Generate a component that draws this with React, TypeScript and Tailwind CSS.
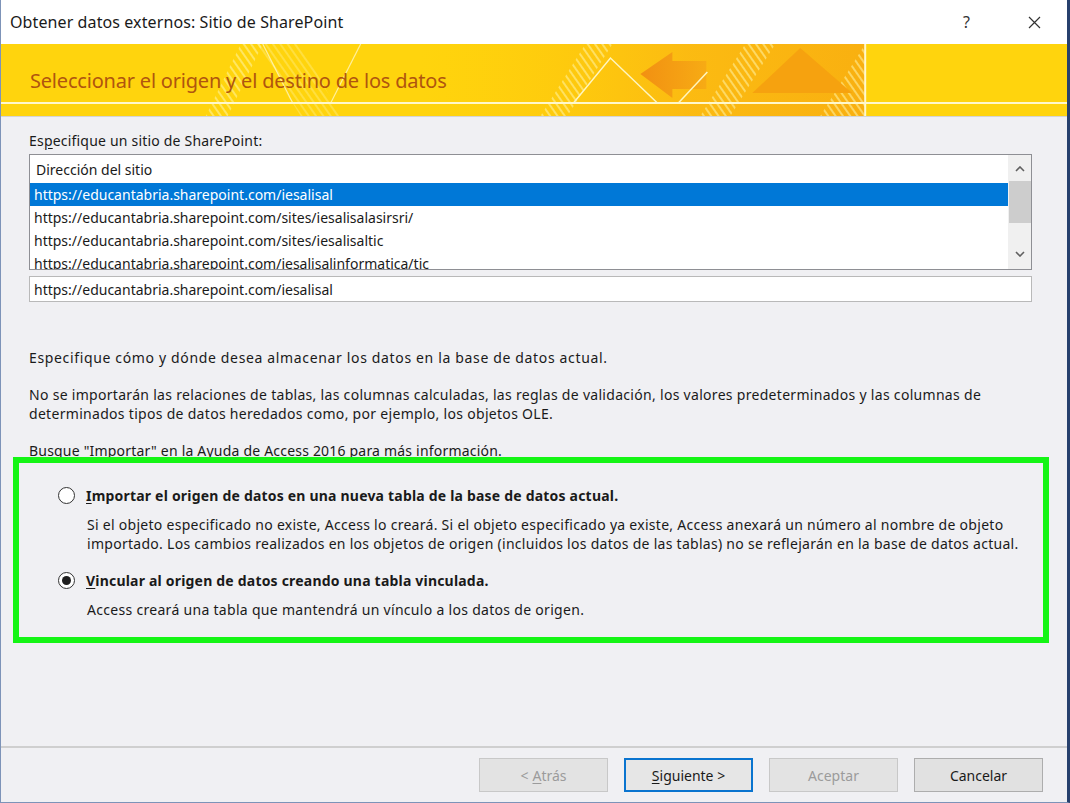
import React from "react";

const urls = [
  "https://educantabria.sharepoint.com/iesalisal",
  "https://educantabria.sharepoint.com/sites/iesalisalasirsri/",
  "https://educantabria.sharepoint.com/sites/iesalisaltic",
  "https://educantabria.sharepoint.com/iesalisalinformatica/tic",
];

const BannerArt = () => (
  <svg className="absolute inset-0 h-full w-full" viewBox="0 0 1067 72" preserveAspectRatio="none">
    <defs>
      <pattern id="hatch" width="6" height="6" patternUnits="userSpaceOnUse" patternTransform="rotate(-35)">
        <rect width="2" height="6" fill="#fff3a6" opacity="0.55" />
      </pattern>
      <linearGradient id="glow" x1="0" x2="1" y1="0" y2="0">
        <stop offset="0" stopColor="#ffc90a" stopOpacity="0" />
        <stop offset="0.6" stopColor="#fbb812" stopOpacity="0.9" />
        <stop offset="1" stopColor="#f9b010" stopOpacity="1" />
      </linearGradient>
      <linearGradient id="arrow" x1="0" x2="1" y1="0" y2="0">
        <stop offset="0" stopColor="#f29012" />
        <stop offset="1" stopColor="#f7ab14" />
      </linearGradient>
    </defs>
    <rect x="420" y="0" width="445" height="72" fill="url(#glow)" />
    <polygon points="205,72 240,0 262,0 227,72" fill="url(#hatch)" />
    <polygon points="540,72 585,0 612,0 567,72" fill="url(#hatch)" />
    <polygon points="700,72 745,0 775,0 730,72" fill="url(#hatch)" />
    <polygon points="820,72 865,0 865,72" fill="url(#hatch)" />
    <polygon points="255,0 300,0 340,72 300,72" fill="url(#hatch)" opacity="0.6" />
    <polygon points="640,30 672,8 672,17 706,17 706,45 672,45 672,54" fill="url(#arrow)" />
    <polygon points="752,49 800,4 852,49" fill="#f6a20f" />
    <polyline points="573,59 610,14 657,59" fill="none" stroke="#fff6c0" strokeWidth="1.5" />
    <polyline points="678,59 707,28" fill="none" stroke="#fff6c0" strokeWidth="1.5" />
    <polyline points="262,0 292,59" fill="none" stroke="#fff6c0" strokeWidth="1.2" opacity="0.8" />
    <polyline points="330,59 360,0" fill="none" stroke="#fff6c0" strokeWidth="1.2" opacity="0.8" />
    <rect x="0" y="58" width="1067" height="2" fill="#fff8cc" />
    <rect x="864" y="0" width="2" height="72" fill="#fff8cc" />
  </svg>
);

const Chevron = ({ up }: { up?: boolean }) => (
  <svg width="10" height="6" viewBox="0 0 10 6">
    <polyline
      points={up ? "1,5 5,1 9,5" : "1,1 5,5 9,1"}
      fill="none"
      stroke="#606060"
      strokeWidth="1.6"
    />
  </svg>
);

const Radio = ({ checked }: { checked?: boolean }) => (
  <span className="flex h-[17px] w-[17px] shrink-0 items-center justify-center rounded-full border border-[#333] bg-white">
    {checked && <span className="h-[9px] w-[9px] rounded-full bg-[#1f1f1f]" />}
  </span>
);

const Button = ({
  children,
  disabled,
  focused,
}: {
  children: React.ReactNode;
  disabled?: boolean;
  focused?: boolean;
}) => (
  <div
    className={
      "flex h-[34px] w-[129px] items-center justify-center text-[14px] " +
      (disabled
        ? "border border-[#c8c8c8] bg-[#e3e3e3] text-[#9b9b9b]"
        : focused
        ? "border-2 border-[#0a74cf] bg-[#e6e6e6] text-[#1a1a1a]"
        : "border border-[#adadad] bg-[#e1e1e1] text-[#1a1a1a]")
    }
  >
    {children}
  </div>
);

export default function App() {
  return (
    <div className="flex h-[803px] w-[1070px] flex-col overflow-hidden border-l border-b border-[#7d93b8] border-r-[3px] border-r-[#27406d] bg-[#f0f0f3] font-['Noto_Sans',sans-serif] text-[#1a1a1a]">
      {/* title bar */}
      <div className="flex h-[44px] shrink-0 items-center justify-between bg-white pl-[9px] pr-[26px]">
        <span className="text-[16px] tracking-[0.1px]">Obtener datos externos: Sitio de SharePoint</span>
        <div className="flex items-center gap-[58px]">
          <span className="text-[16px] text-[#333]">?</span>
          <svg width="13" height="13" viewBox="0 0 13 13">
            <path d="M1 1 L12 12 M12 1 L1 12" stroke="#333" strokeWidth="1.2" />
          </svg>
        </div>
      </div>

      {/* banner */}
      <div className="relative flex h-[72px] shrink-0 items-start bg-[#ffd40d] pl-[29px] pt-[22px]">
        <BannerArt />
        <span className="relative text-[20px] tracking-[-0.2px] text-[#b0550f]">
          Seleccionar el origen y el destino de los datos
        </span>
      </div>
      <div className="h-px shrink-0 bg-[#d4d4d4]" />

      {/* body */}
      <div className="flex flex-1 flex-col pl-[28px] pr-[35px] pt-[15px] text-[14px]">
        <div className="leading-[18px] tracking-[0.2px]">
          Es<u className="underline-offset-2">p</u>ecifique un sitio de SharePoint:
        </div>

        <div className="mt-[4px] flex h-[116px] border border-[#8e8f94] bg-white">
          <div className="flex flex-1 flex-col overflow-hidden">
            <div className="flex h-[28px] shrink-0 items-center pl-[6px]">Dirección del sitio</div>
            {urls.map((u, i) => (
              <div
                key={u}
                className={
                  "flex h-[23px] shrink-0 items-center pl-[4px] " +
                  (i === 0 ? "bg-[#0078d7] text-white" : "")
                }
              >
                {u}
              </div>
            ))}
          </div>
          <div className="flex w-[23px] flex-col items-center bg-[#f0f0f0]">
            <div className="flex h-[26px] items-center justify-center pt-[2px]">
              <Chevron up />
            </div>
            <div className="h-[42px] w-[22px] bg-[#cdcdcd]" />
            <div className="flex-1" />
            <div className="flex h-[26px] items-center justify-center pb-[4px]">
              <Chevron />
            </div>
          </div>
        </div>

        <div className="mt-[6px] flex h-[26px] items-center border border-[#b9b9b9] bg-white pl-[4px]">
          https://educantabria.sharepoint.com/iesalisal
        </div>

        <p className="mt-[46px] leading-[19px] tracking-[0.65px]">
          Especifique cómo y dónde desea almacenar los datos en la base de datos actual.
        </p>
        <p className="mt-[18px] leading-[19px] tracking-[0.3px]">
          No se importarán las relaciones de tablas, las columnas calculadas, las reglas de validación, los valores
          predeterminados y las columnas de
          <br />
          determinados tipos de datos heredados como, por ejemplo, los objetos OLE.
        </p>
        <p className="mt-[18px] h-[16px] overflow-hidden leading-[19px] tracking-[0.2px]">
          Busque "Importar" en la Ayuda de Access 2016 para más información.
        </p>

        <div className="-ml-[16px] -mr-[17px] flex flex-col border-[6px] border-[#14f514] pb-[18px] pl-[39px] pr-[10px] pt-[22px]">
          <div className="flex items-center gap-[11px]">
            <Radio />
            <span className="font-bold tracking-[0.2px]">
              <u className="underline-offset-2">I</u>mportar el origen de datos en una nueva tabla de la base de datos actual.
            </span>
          </div>
          <p className="mt-[9px] pl-[29px] leading-[19px] tracking-[0.28px]">
            Si el objeto especificado no existe, Access lo creará. Si el objeto especificado ya existe, Access anexará un
            número al nombre de objeto
            <br />
            importado. Los cambios realizados en los objetos de origen (incluidos los datos de las tablas) no se
            reflejarán en la base de datos actual.
          </p>
          <div className="mt-[17px] flex items-center gap-[11px]">
            <Radio checked />
            <span className="font-bold tracking-[0.2px]">
              <u className="underline-offset-2">V</u>incular al origen de datos creando una tabla vinculada.
            </span>
          </div>
          <p className="mt-[9px] pl-[29px] leading-[19px] tracking-[0.3px]">
            Access creará una tabla que mantendrá un vínculo a los datos de origen.
          </p>
        </div>
      </div>

      {/* footer */}
      <div className="flex h-[56px] shrink-0 items-start justify-end gap-[16px] border-t-2 border-[#cfcfcf] pr-[24px] pt-[10px]">
        <Button disabled>
          &lt; <u className="ml-1 underline-offset-2">A</u>trás
        </Button>
        <Button focused>
          <u className="underline-offset-2">S</u>iguiente &gt;
        </Button>
        <Button disabled>Aceptar</Button>
        <Button>Cancelar</Button>
      </div>
    </div>
  );
}
